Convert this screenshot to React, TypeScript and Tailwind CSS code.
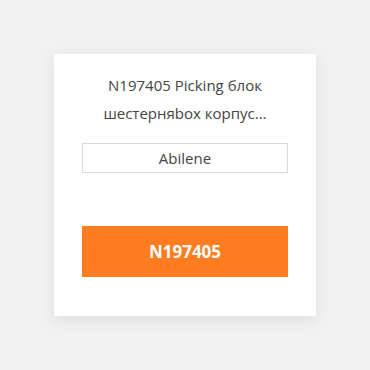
export default function App() {
  return (
    <div className="flex h-[370px] w-[370px] items-start justify-center bg-[#f1f1f1] pt-[54px] font-['Open_Sans',sans-serif]">
      <div className="flex h-[262px] w-[262px] flex-col items-center bg-white px-[28px] pt-[17px] shadow-[0_4px_14px_rgba(0,0,0,0.08)]">
        <p className="text-center text-[15px] leading-[28px] text-[#444]">
          N197405 Picking блок шестерняbox корпус...
        </p>
        <div className="mt-[16px] flex h-[30px] w-full items-center justify-center border border-[#d9d9d9] text-[15px] text-[#444]">
          Abilene
        </div>
        <button
          type="button"
          className="mt-[53px] flex h-[51px] w-full items-center justify-center bg-[#ff7c20] text-[17px] font-bold text-white"
        >
          N197405
        </button>
      </div>
    </div>
  );
}
